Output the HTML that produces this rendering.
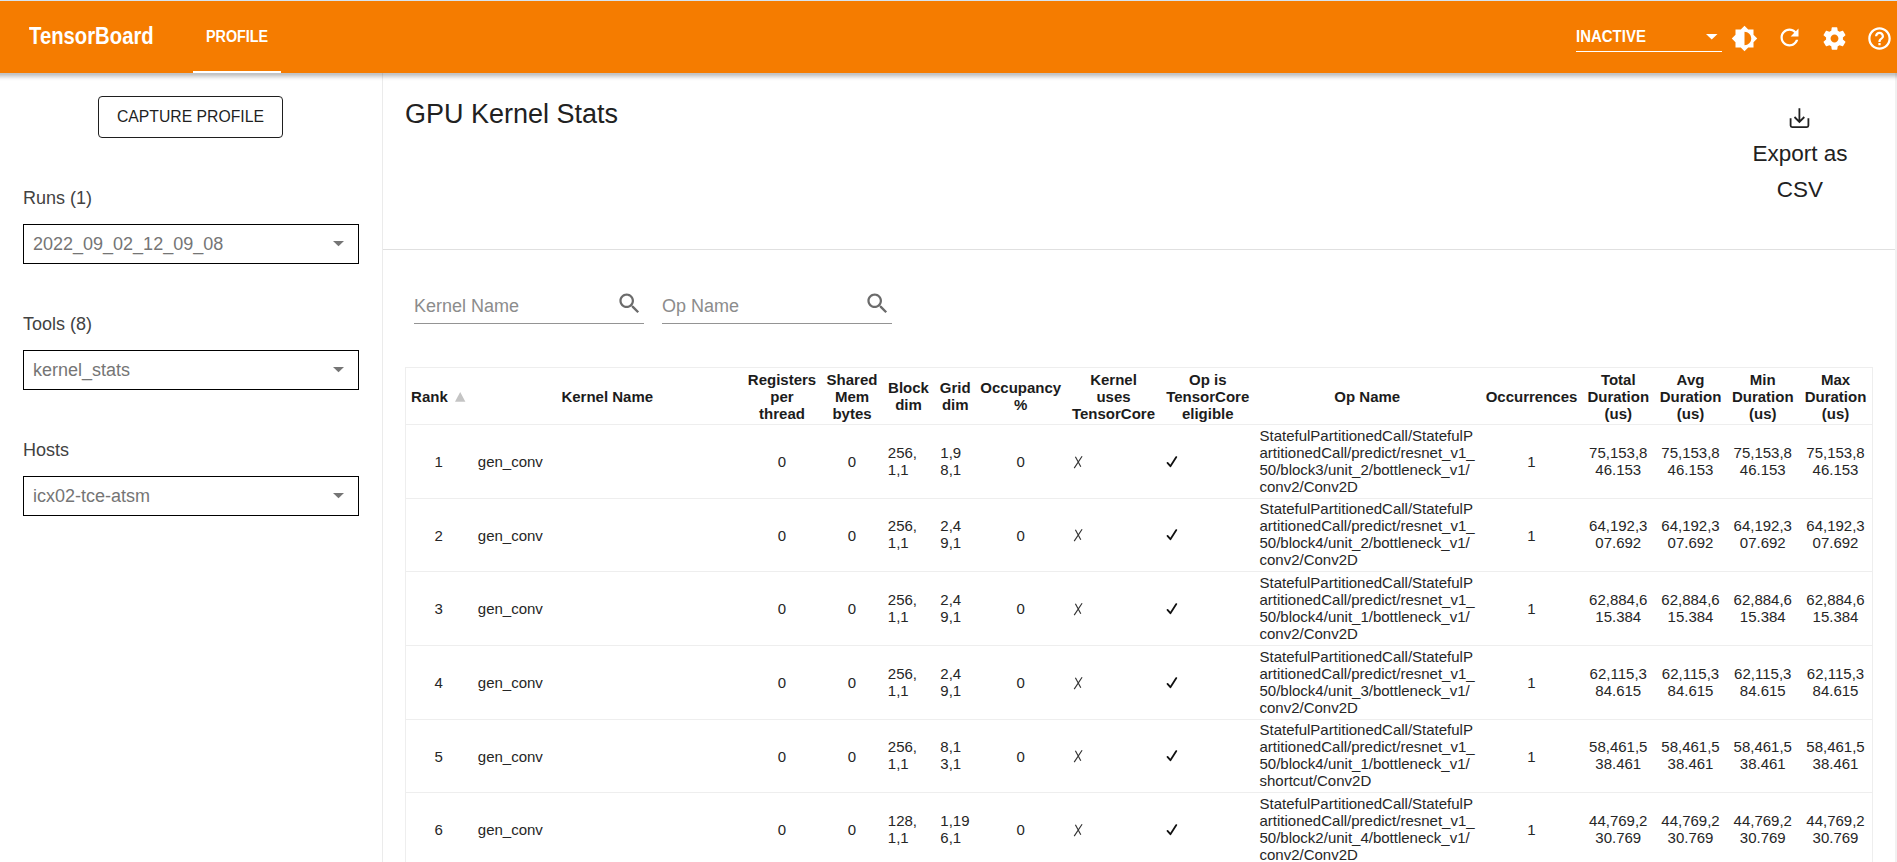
<!DOCTYPE html>
<html><head><meta charset="utf-8">
<style>
html,body{margin:0;padding:0}
body{width:1897px;height:862px;overflow:hidden;position:relative;background:#fff;font-family:"Liberation Sans",sans-serif;color:#212121}
.abs{position:absolute}
#topline{left:0;top:0;width:1897px;height:1px;background:#d6e4f0}
#hdr{left:0;top:1px;width:1897px;height:72px;background:#f57c00}
#shadow{left:0;top:73px;width:1897px;height:8px;background:linear-gradient(to bottom,rgba(30,45,60,.28),rgba(0,0,0,.24) 15%,rgba(0,0,0,.13) 45%,rgba(0,0,0,.03) 75%,rgba(0,0,0,0));z-index:5}
.wt{color:#fff;font-weight:bold;white-space:nowrap}
#brand{left:29px;top:22.4px;font-size:24px;line-height:28px;transform-origin:0 0;transform:scaleX(.845)}
#prof{left:206px;top:28px;font-size:16px;line-height:18px;transform-origin:0 0;transform:scaleX(.897)}
#profline{left:193px;top:71px;width:88px;height:2px;background:#fff}
#inact{left:1576px;top:28px;font-size:16px;line-height:18px;transform-origin:0 0;transform:scaleX(.936)}
#inactline{left:1576px;top:51px;width:146px;height:1px;background:#fff}
#side{left:0;top:73px;width:382px;height:789px;border-right:1px solid #ebebeb}
#btn{left:98px;top:96px;width:183px;height:40px;border:1px solid #1f1f1f;border-radius:4px;font-size:15.75px;line-height:40px;text-align:center;color:#1f1f1f}
.lbl{left:23px;font-size:18px;line-height:20px;color:#424242;white-space:nowrap}
.sel{left:23px;width:334px;height:38px;border:1px solid #000;font-size:18px;line-height:38px;color:#757575;white-space:nowrap}
.sel span{position:absolute;left:9px;top:0}
.sel svg{position:absolute;left:308.9px;top:15.9px}
#title{left:405px;top:98.2px;font-size:27px;line-height:32px;color:#212121;white-space:nowrap}
#export{left:1740px;top:136px;width:120px;text-align:center;font-size:22.5px;line-height:36px;color:#212121}
#hr{left:383px;top:249px;width:1512px;height:1px;background:#e0e0e0}
#scroll{left:1895px;top:73px;width:2px;height:789px;background:#f1f1f1}
.srch{top:284px;width:230px;height:39px;border-bottom:1px solid #949494}
.srch span{position:absolute;left:0;top:12px;font-size:18px;line-height:20px;color:#8c8c8c;white-space:nowrap}
.srch svg{position:absolute;left:202.3px;top:5.6px}
table{position:absolute;left:405px;top:367px;width:1468px;border-collapse:separate;border-spacing:0;table-layout:fixed;border:1px solid #eee;border-bottom:0;font-size:15px;line-height:17px;color:#262626}
th,td{padding:0;border-bottom:1px solid #eee;vertical-align:middle;overflow:hidden}
th{font-weight:bold;text-align:center;color:#1c1c1c;height:56px}
td{text-align:center}
td.m{padding-bottom:2px}
td.l{text-align:left}
.ic{display:block}
th.rk{text-align:left;padding-left:5.1px;position:relative}
.tri{position:absolute;left:48.8px;top:24px}
</style></head><body>
<div id="topline" class="abs"></div>
<div id="hdr" class="abs"></div>
<div id="shadow" class="abs"></div>
<div id="brand" class="abs wt">TensorBoard</div>
<div id="prof" class="abs wt">PROFILE</div>
<div id="profline" class="abs"></div>
<div id="inact" class="abs wt">INACTIVE</div>
<div id="inactline" class="abs"></div>

<div id="side" class="abs"></div>
<div id="btn" class="abs">CAPTURE PROFILE</div>
<div class="abs lbl" style="top:188px">Runs (1)</div>
<div class="abs sel" style="top:224px"><span>2022_09_02_12_09_08</span><svg width="12" height="6" viewBox="0 0 12 6"><path d="M0 0H11L5.5 5.3Z" fill="#757575"/></svg></div>
<div class="abs lbl" style="top:314px">Tools (8)</div>
<div class="abs sel" style="top:350px"><span>kernel_stats</span><svg width="12" height="6" viewBox="0 0 12 6"><path d="M0 0H11L5.5 5.3Z" fill="#757575"/></svg></div>
<div class="abs lbl" style="top:440px">Hosts</div>
<div class="abs sel" style="top:476px"><span>icx02-tce-atsm</span><svg width="12" height="6" viewBox="0 0 12 6"><path d="M0 0H11L5.5 5.3Z" fill="#757575"/></svg></div>

<div id="title" class="abs">GPU Kernel Stats</div>
<div id="export" class="abs">Export as<br>CSV</div>
<div id="hr" class="abs"></div>
<div id="scroll" class="abs"></div>
<svg class="abs" style="left:1731px;top:25px" width="27" height="27" viewBox="0 0 24 24"><path fill="#fff" d="M20 15.31L23.31 12 20 8.69V4h-4.69L12 .69 8.69 4H4v4.69L.69 12 4 15.31V20h4.69L12 23.31 15.31 20H20v-4.69zM12 18V6c3.31 0 6 2.69 6 6s-2.69 6-6 6z"/></svg>
<svg class="abs" style="left:1775.8px;top:23.5px" width="27" height="27" viewBox="0 0 24 24"><path fill="#fff" d="M17.65 6.35C16.2 4.9 14.21 4 12 4c-4.42 0-7.99 3.58-7.99 8s3.57 8 7.99 8c3.73 0 6.84-2.55 7.73-6h-2.08c-.82 2.33-3.04 4-5.65 4-3.31 0-6-2.69-6-6s2.69-6 6-6c1.66 0 3.14.69 4.22 1.78L13 11h7V4l-2.35 2.35z"/></svg>
<svg class="abs" style="left:1821px;top:25px" width="27" height="27" viewBox="0 0 24 24"><path fill="#fff" d="M19.43 12.98c.04-.32.07-.64.07-.98s-.03-.66-.07-.98l2.11-1.65c.19-.15.24-.42.12-.64l-2-3.46c-.12-.22-.39-.3-.61-.22l-2.49 1c-.52-.4-1.08-.73-1.69-.98l-.38-2.65C14.46 2.18 14.25 2 14 2h-4c-.25 0-.46.18-.49.42l-.38 2.65c-.61.25-1.170.59-1.69.98l-2.49-1c-.23-.09-.49 0-.61.22l-2 3.46c-.13.22-.07.49.12.64l2.11 1.65c-.04.32-.07.65-.07.98s.03.66.07.98l-2.11 1.65c-.19.15-.24.42-.12.64l2 3.46c.12.22.39.3.61.22l2.49-1c.52.4 1.08.73 1.69.98l.38 2.65c.03.24.24.42.49.42h4c.25 0 .46-.18.49-.42l.38-2.65c.61-.25 1.17-.59 1.69-.98l2.49 1c.23.09.49 0 .61-.22l2-3.46c.12-.22.07-.49-.12-.64l-2.11-1.65zM12 15.5c-1.93 0-3.5-1.57-3.5-3.5s1.57-3.5 3.5-3.5 3.5 1.57 3.5 3.5-1.57 3.5-3.5 3.5z"/></svg>
<svg class="abs" style="left:1866px;top:25px" width="27" height="27" viewBox="0 0 24 24"><path fill="#fff" d="M11 18h2v-2h-2v2zm1-16C6.48 2 2 6.48 2 12s4.48 10 10 10 10-4.48 10-10S17.52 2 12 2zm0 18c-4.41 0-8-3.59-8-8s3.59-8 8-8 8 3.59 8 8-3.59 8-8 8zm0-14c-2.21 0-4 1.79-4 4h2c0-1.1.9-2 2-2s2 .9 2 2c0 2-3 1.75-3 5h2c0-2.25 3-2.5 3-5 0-2.21-1.79-4-4-4z"/></svg>
<svg class="abs" style="left:1706px;top:34px" width="12" height="6" viewBox="0 0 12 6"><path fill="#fff" d="M0 0H11.5L5.75 5.5Z"/></svg>
<svg class="abs" style="left:0;top:0" width="1897" height="862" viewBox="0 0 1897 862"><path d="M1790.6 118.3V125.6Q1790.6 127.1 1792.1 127.1H1806.9Q1808.4 127.1 1808.4 125.6V118.3M1799.4 108.2V121.5M1794.5 117L1799.4 121.9L1804.3 117" stroke="#212121" stroke-width="1.8" fill="none"/></svg>


<div class="abs srch" style="left:414px"><span>Kernel Name</span><svg width="27" height="27" viewBox="0 0 24 24"><path fill="#6b6b6b" d="M15.5 14h-.79l-.28-.27C15.41 12.59 16 11.11 16 9.5 16 5.91 13.09 3 9.5 3S3 5.910 3 9.5 5.91 16 9.5 16c1.61 0 3.09-.59 4.23-1.57l.27.28v.79l5 4.99L20.49 19l-4.99-5zm-6 0C7.01 14 5 11.99 5 9.5S7.01 5 9.5 5 14 7.01 14 9.5 11.99 14 9.5 14z"/></svg></div>
<div class="abs srch" style="left:662px"><span>Op Name</span><svg width="27" height="27" viewBox="0 0 24 24"><path fill="#6b6b6b" d="M15.5 14h-.79l-.28-.27C15.41 12.59 16 11.11 16 9.5 16 5.91 13.09 3 9.5 3S3 5.910 3 9.5 5.91 16 9.5 16c1.61 0 3.09-.59 4.23-1.57l.27.28v.79l5 4.99L20.49 19l-4.99-5zm-6 0C7.01 14 5 11.99 5 9.5S7.01 5 9.5 5 14 7.01 14 9.5 11.99 14 9.5 14z"/></svg></div>

<table>
<colgroup>
<col style="width:65.5px"><col style="width:271.5px"><col style="width:78px"><col style="width:62px"><col style="width:51px"><col style="width:42.5px"><col style="width:88.5px"><col style="width:97px"><col style="width:91.5px"><col style="width:227.5px"><col style="width:101px"><col style="width:72.5px"><col style="width:72px"><col style="width:72.5px"><col style="width:73px">
</colgroup>
<tr><th class="rk">Rank<svg class="tri" width="11" height="10" viewBox="0 0 11 10"><path d="M5.2 0L10.4 9.7H0Z" fill="#c4c4c4"/></svg></th><th>Kernel Name</th><th>Registers<br>per<br>thread</th><th>Shared<br>Mem<br>bytes</th><th>Block<br>dim</th><th>Grid<br>dim</th><th>Occupancy<br>%</th><th>Kernel<br>uses<br>TensorCore</th><th>Op is<br>TensorCore<br>eligible</th><th>Op Name</th><th>Occurrences</th><th>Total<br>Duration<br>(us)</th><th>Avg<br>Duration<br>(us)</th><th>Min<br>Duration<br>(us)</th><th>Max<br>Duration<br>(us)</th></tr>
<tr style="height:74px"><td>1</td><td class="l" style="padding-left:6.3px">gen_conv</td><td>0</td><td>0</td><td class="l m" style="padding-left:4.8px">256,<br>1,1</td><td class="l m" style="padding-left:6.3px">1,9<br>8,1</td><td>0</td><td class="l" style="padding-left:8px"><svg class="ic" width="12" height="14" viewBox="0 0 12 14"><path d="M1.2 13.1L9.1 1.3M2.4 1.7L7.8 11.8" stroke="#333" stroke-width="1.15" fill="none"/></svg></td><td class="l" style="padding-left:3px"><svg class="ic" width="13" height="14" viewBox="0 0 13 14"><path d="M2.5 7.9L5.4 11.2L11.3 2.1" stroke="#111" stroke-width="1.8" fill="none" stroke-linecap="round" stroke-linejoin="round"/></svg></td><td class="l m" style="padding-left:6px">StatefulPartitionedCall/StatefulP<br>artitionedCall/predict/resnet_v1_<br>50/block3/unit_2/bottleneck_v1/<br>conv2/Conv2D</td><td>1</td><td class="m">75,153,8<br>46.153</td><td class="m">75,153,8<br>46.153</td><td class="m">75,153,8<br>46.153</td><td class="m">75,153,8<br>46.153</td></tr>
<tr style="height:73px"><td>2</td><td class="l" style="padding-left:6.3px">gen_conv</td><td>0</td><td>0</td><td class="l m" style="padding-left:4.8px">256,<br>1,1</td><td class="l m" style="padding-left:6.3px">2,4<br>9,1</td><td>0</td><td class="l" style="padding-left:8px"><svg class="ic" width="12" height="14" viewBox="0 0 12 14"><path d="M1.2 13.1L9.1 1.3M2.4 1.7L7.8 11.8" stroke="#333" stroke-width="1.15" fill="none"/></svg></td><td class="l" style="padding-left:3px"><svg class="ic" width="13" height="14" viewBox="0 0 13 14"><path d="M2.5 7.9L5.4 11.2L11.3 2.1" stroke="#111" stroke-width="1.8" fill="none" stroke-linecap="round" stroke-linejoin="round"/></svg></td><td class="l m" style="padding-left:6px">StatefulPartitionedCall/StatefulP<br>artitionedCall/predict/resnet_v1_<br>50/block4/unit_2/bottleneck_v1/<br>conv2/Conv2D</td><td>1</td><td class="m">64,192,3<br>07.692</td><td class="m">64,192,3<br>07.692</td><td class="m">64,192,3<br>07.692</td><td class="m">64,192,3<br>07.692</td></tr>
<tr style="height:74px"><td>3</td><td class="l" style="padding-left:6.3px">gen_conv</td><td>0</td><td>0</td><td class="l m" style="padding-left:4.8px">256,<br>1,1</td><td class="l m" style="padding-left:6.3px">2,4<br>9,1</td><td>0</td><td class="l" style="padding-left:8px"><svg class="ic" width="12" height="14" viewBox="0 0 12 14"><path d="M1.2 13.1L9.1 1.3M2.4 1.7L7.8 11.8" stroke="#333" stroke-width="1.15" fill="none"/></svg></td><td class="l" style="padding-left:3px"><svg class="ic" width="13" height="14" viewBox="0 0 13 14"><path d="M2.5 7.9L5.4 11.2L11.3 2.1" stroke="#111" stroke-width="1.8" fill="none" stroke-linecap="round" stroke-linejoin="round"/></svg></td><td class="l m" style="padding-left:6px">StatefulPartitionedCall/StatefulP<br>artitionedCall/predict/resnet_v1_<br>50/block4/unit_1/bottleneck_v1/<br>conv2/Conv2D</td><td>1</td><td class="m">62,884,6<br>15.384</td><td class="m">62,884,6<br>15.384</td><td class="m">62,884,6<br>15.384</td><td class="m">62,884,6<br>15.384</td></tr>
<tr style="height:74px"><td>4</td><td class="l" style="padding-left:6.3px">gen_conv</td><td>0</td><td>0</td><td class="l m" style="padding-left:4.8px">256,<br>1,1</td><td class="l m" style="padding-left:6.3px">2,4<br>9,1</td><td>0</td><td class="l" style="padding-left:8px"><svg class="ic" width="12" height="14" viewBox="0 0 12 14"><path d="M1.2 13.1L9.1 1.3M2.4 1.7L7.8 11.8" stroke="#333" stroke-width="1.15" fill="none"/></svg></td><td class="l" style="padding-left:3px"><svg class="ic" width="13" height="14" viewBox="0 0 13 14"><path d="M2.5 7.9L5.4 11.2L11.3 2.1" stroke="#111" stroke-width="1.8" fill="none" stroke-linecap="round" stroke-linejoin="round"/></svg></td><td class="l m" style="padding-left:6px">StatefulPartitionedCall/StatefulP<br>artitionedCall/predict/resnet_v1_<br>50/block4/unit_3/bottleneck_v1/<br>conv2/Conv2D</td><td>1</td><td class="m">62,115,3<br>84.615</td><td class="m">62,115,3<br>84.615</td><td class="m">62,115,3<br>84.615</td><td class="m">62,115,3<br>84.615</td></tr>
<tr style="height:73px"><td>5</td><td class="l" style="padding-left:6.3px">gen_conv</td><td>0</td><td>0</td><td class="l m" style="padding-left:4.8px">256,<br>1,1</td><td class="l m" style="padding-left:6.3px">8,1<br>3,1</td><td>0</td><td class="l" style="padding-left:8px"><svg class="ic" width="12" height="14" viewBox="0 0 12 14"><path d="M1.2 13.1L9.1 1.3M2.4 1.7L7.8 11.8" stroke="#333" stroke-width="1.15" fill="none"/></svg></td><td class="l" style="padding-left:3px"><svg class="ic" width="13" height="14" viewBox="0 0 13 14"><path d="M2.5 7.9L5.4 11.2L11.3 2.1" stroke="#111" stroke-width="1.8" fill="none" stroke-linecap="round" stroke-linejoin="round"/></svg></td><td class="l m" style="padding-left:6px">StatefulPartitionedCall/StatefulP<br>artitionedCall/predict/resnet_v1_<br>50/block4/unit_1/bottleneck_v1/<br>shortcut/Conv2D</td><td>1</td><td class="m">58,461,5<br>38.461</td><td class="m">58,461,5<br>38.461</td><td class="m">58,461,5<br>38.461</td><td class="m">58,461,5<br>38.461</td></tr>
<tr style="height:74px"><td>6</td><td class="l" style="padding-left:6.3px">gen_conv</td><td>0</td><td>0</td><td class="l m" style="padding-left:4.8px">128,<br>1,1</td><td class="l m" style="padding-left:6.3px">1,19<br>6,1</td><td>0</td><td class="l" style="padding-left:8px"><svg class="ic" width="12" height="14" viewBox="0 0 12 14"><path d="M1.2 13.1L9.1 1.3M2.4 1.7L7.8 11.8" stroke="#333" stroke-width="1.15" fill="none"/></svg></td><td class="l" style="padding-left:3px"><svg class="ic" width="13" height="14" viewBox="0 0 13 14"><path d="M2.5 7.9L5.4 11.2L11.3 2.1" stroke="#111" stroke-width="1.8" fill="none" stroke-linecap="round" stroke-linejoin="round"/></svg></td><td class="l m" style="padding-left:6px">StatefulPartitionedCall/StatefulP<br>artitionedCall/predict/resnet_v1_<br>50/block2/unit_4/bottleneck_v1/<br>conv2/Conv2D</td><td>1</td><td class="m">44,769,2<br>30.769</td><td class="m">44,769,2<br>30.769</td><td class="m">44,769,2<br>30.769</td><td class="m">44,769,2<br>30.769</td></tr>
</table>
</body></html>
